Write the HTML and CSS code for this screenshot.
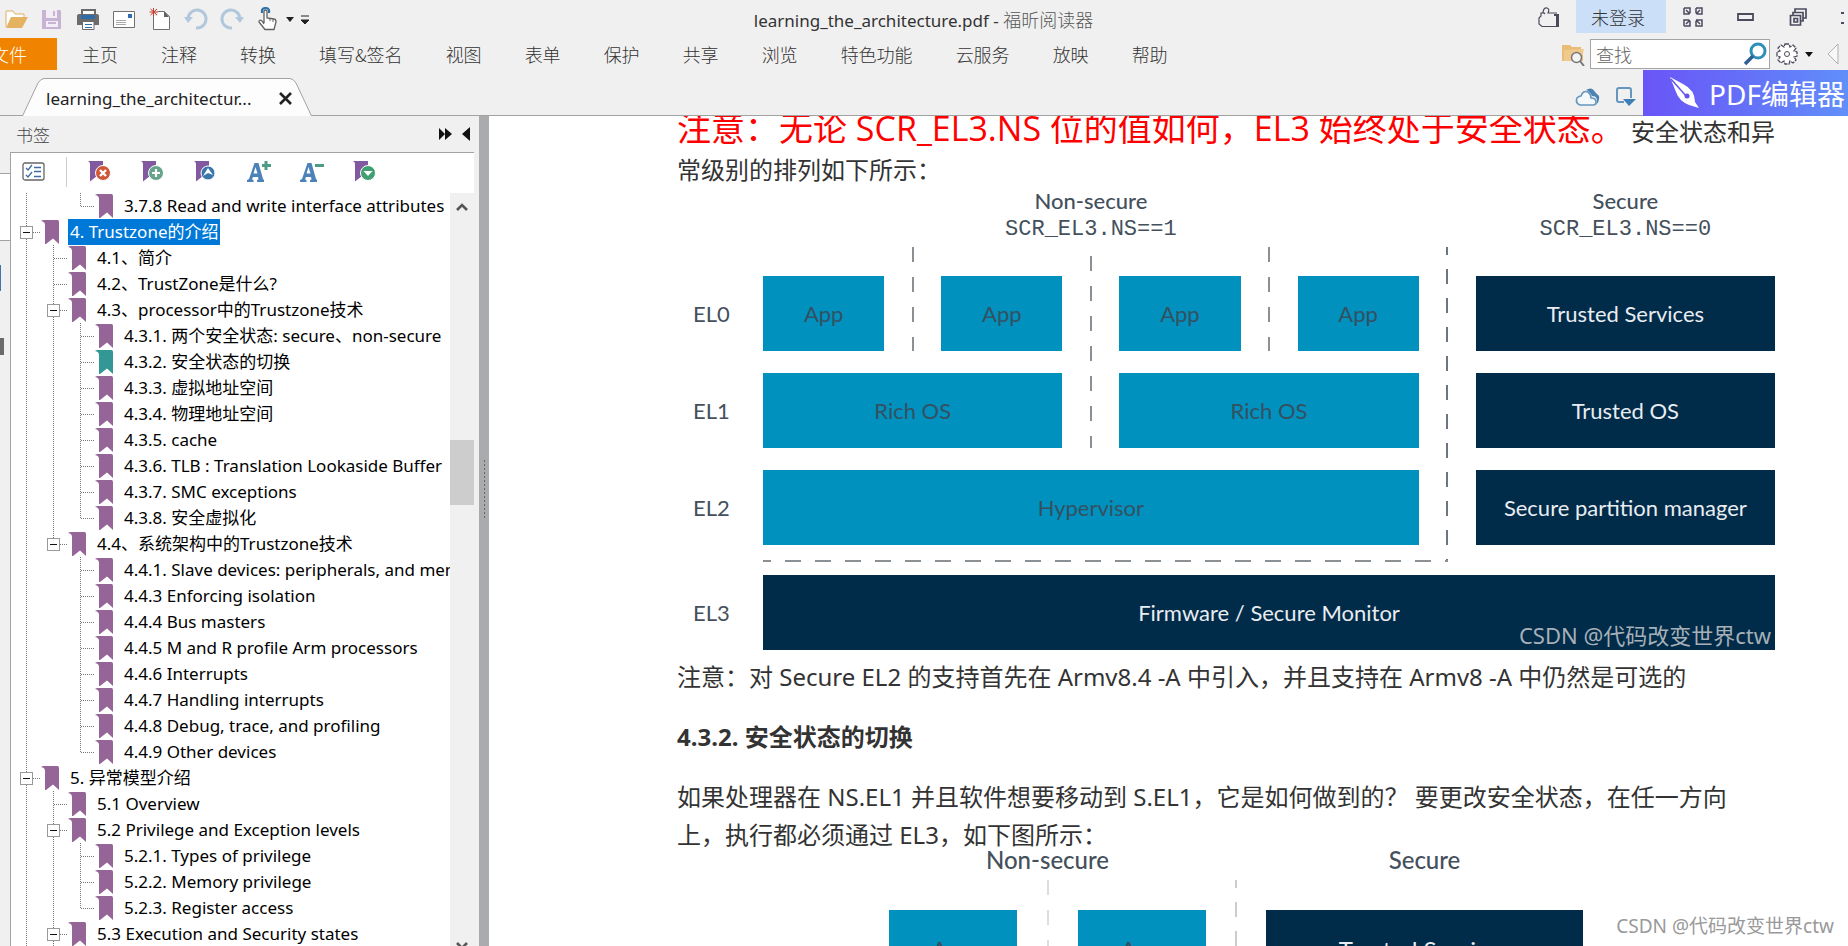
FILE: index.html
```html
<!DOCTYPE html>
<html lang="zh-CN">
<head>
<meta charset="utf-8">
<title>learning_the_architecture.pdf - 福昕阅读器</title>
<link rel="stylesheet" href="styles.css">
</head>
<body>
<svg class="defs" aria-hidden="true">
  <symbol id="bm" viewBox="0 0 18 24"><path d="M0 1Q1 0 3 0H16.500Q18 0 18 2V24L12 18.500 5 24H4V5Q4 1.500 0 1Z"/></symbol>
  <symbol id="tbm" viewBox="0 0 22 22"><path d="M0 0H15V18L9 15 2 20.500V3Q2 1 0 0Z" fill="#82589f"/></symbol>
</svg>
<header class="top">
  <div class="titlebar">
    <div class="quick">
      <button aria-label="打开"><svg width="24" height="24" viewBox="0 0 24 24"><path d="M2 20V4H9L11 7H20V11" fill="#fff" stroke="#dfae65"/><path d="M2 21L7 10H24L18 21Z" fill="#e4b261"/></svg></button>
      <button aria-label="保存"><svg width="24" height="24" viewBox="0 0 24 24"><path d="M2 3H20L21 4V22H2Z" fill="#c7b4d5"/><path d="M6 3H17V11H6ZM6 14H18V20H6Z" fill="#f3eef6"/><path d="M13 4H15V9H13ZM8 15H16V17H8Z" fill="#c7b4d5"/></svg></button>
      <button aria-label="打印"><svg width="24" height="24" viewBox="0 0 24 24"><path d="M6 3H19V8H6Z" fill="#fff" stroke="#6b6b6b" stroke-width="2"/><path d="M1 9Q1 7 3 7H21Q23 7 23 9V18H1Z" fill="#6b6b6b"/><path d="M5 8H19V12H5Z" fill="#2f6ca8"/><path d="M6.500 14.500H18V22.500H6.500Z" fill="#fff" stroke="#6b6b6b"/><path d="M9 17.500H16M9 20.500H16" stroke="#2f6ca8"/></svg></button>
      <button aria-label="邮件"><svg width="24" height="24" viewBox="0 0 24 24"><path d="M1.500 4.500H22.500V20.500H1.500Z" fill="#fff" stroke="#707070"/><path d="M16 7H20V11H16Z" fill="#2f6cb0"/><path d="M4 13.500H14M4 15.500H14M4 17.500H14" stroke="#aaa"/></svg></button>
      <button aria-label="新建"><svg width="24" height="24" viewBox="0 0 24 24"><path d="M5.500 4.500H16L21.500 9.500V22.500H5.500Z" fill="#fff" stroke="#707070"/><path d="M16 4V10H21Z" fill="#606060"/><path d="M1 1H10V9H1Z" fill="#efefef"/><path d="M5.500 1V9M1.500 5H10M2.500 2L9 8M9 2L2.500 8" stroke="#c43b28"/></svg></button>
      <button aria-label="撤销"><svg width="24" height="24" viewBox="0 0 24 24"><path d="M4 12A9 9 0 1 1 12 21" fill="none" stroke="#b1c7dc" stroke-width="3"/><path d="M0 10H9L4 16Z" fill="#b1c7dc"/></svg></button>
      <button aria-label="重做"><svg width="24" height="24" viewBox="0 0 24 24"><path d="M20 12A9 9 0 1 0 12 21" fill="none" stroke="#b1c7dc" stroke-width="3"/><path d="M15 10H24L20 16Z" fill="#b1c7dc"/></svg></button>
      <button aria-label="手型工具"><svg width="24" height="24" viewBox="0 0 24 24"><path d="M8 16V4Q9 2 11 4V11L18 12Q20 12 20 15L18 22.500H9L3 15Q3 12 6 14L8 17" fill="#fff" stroke="#606060" stroke-width="1.300"/><path d="M6 6V3Q7 1 9.500 1T13 3V6" fill="none" stroke="#2d72ab" stroke-width="2.200"/><path d="M14 12V14M17 12V15" stroke="#606060"/></svg></button>
      <svg width="10" height="24" viewBox="0 0 10 24"><path d="M1 10H9L5 15Z" fill="#222"/></svg>
      <svg width="10" height="24" viewBox="0 0 10 24"><path d="M1 9H9M1 13H9L5 17Z" fill="#222" stroke="#222"/></svg>
    </div>
    <h1 class="apptitle">learning_the_architecture.pdf - <span class="cjk">福昕阅读器</span></h1>
    <div class="window">
      <button class="skin" aria-label="皮肤"><svg width="24" height="24" viewBox="0 0 24 24"><path d="M8 9L6 7Q7 2 10 3T11 8L20 8M7 8H4V11L2 13V19L5 21.500H19" fill="none" stroke="#4b4b60" stroke-width="1.200"/><path d="M17 9H22V22H17V21H19V11H17Z" fill="#4b4b60"/></svg></button>
      <button class="login">未登录</button>
      <button aria-label="全屏"><svg width="22" height="24" viewBox="0 0 22 24"><g fill="none" stroke="#4b4b60" stroke-width="1.500"><path d="M2 3H8V8M2 3V9H7M4 5L8 9M14 3H20V9H15M14 3V8M18 5L14 9M2 21V15H7M2 21H8V16M4 19L8 15M14 15H20V21H14V16M18 19L14 15"/></g></svg></button>
      <button aria-label="最小化"><svg width="20" height="24" viewBox="0 0 20 24"><path d="M2 9H17V15H2Z" fill="none" stroke="#4b4b60" stroke-width="1.800"/></svg></button>
      <button aria-label="还原"><svg width="20" height="24" viewBox="0 0 20 24"><path d="M7 7V4H18V13H15M5 10V7.500H15V16H13M2.500 10.500H12.500V20H2.500ZM6 13.500H9.500V17H6Z" fill="none" stroke="#4b4b60" stroke-width="1.700"/></svg></button>
      <button class="closewin" aria-label="关闭"><svg width="4" height="24" viewBox="0 0 4 24"><path d="M1 7H4V9H1ZM1 17H4V19H1Z" fill="#4b4b60"/></svg></button>
    </div>
  </div>
  <div class="ribbon">
    <button class="file">文件</button>
    <nav class="menu">
      <button>主页</button><button>注释</button><button>转换</button><button>填写&amp;签名</button><button>视图</button><button>表单</button><button>保护</button><button>共享</button><button>浏览</button><button>特色功能</button><button>云服务</button><button>放映</button><button>帮助</button>
    </nav>
    <div class="find">
      <svg width="24" height="24" viewBox="0 0 24 24"><path d="M1 3H9L11 5H20V8H22V19H1Z" fill="#e9bd78"/><path d="M3 8L23 7 20 19H3Z" fill="#f0ca8c"/><circle cx="15.500" cy="15.500" r="5" fill="#f4f4f4" stroke="#777" stroke-width="1.500"/><path d="M19 19L23 24" stroke="#777" stroke-width="2"/></svg>
      <label class="search"><input type="text" placeholder="查找" aria-label="查找"><svg width="24" height="24" viewBox="0 0 24 24"><circle cx="15" cy="9" r="7" fill="#fff" stroke="#2f8fb8" stroke-width="3"/><path d="M10 14L2 22" stroke="#2f5f95" stroke-width="3.500"/></svg></label>
      <svg width="24" height="24" viewBox="0 0 24 24"><path d="M10 2H14L15 5L18 3L21 6L19 9L22 10V14L19 15L21 18L18 21L15 19L14 22H10L9 19L6 21L3 18L5 15L2 14V10L5 9L3 6L6 3L9 5Z" fill="#fff" stroke="#4b4b60" stroke-width="1.300" stroke-dasharray="4 1"/><circle cx="12" cy="12" r="2.500" fill="none" stroke="#4b4b60"/></svg>
      <svg width="10" height="24" viewBox="0 0 10 24"><path d="M1 10H9L5 15Z" fill="#111"/></svg>
      <svg class="prev" width="13" height="24" viewBox="0 0 13 24"><path d="M12 2V22L2 12Z" fill="#f8f8f8" stroke="#b0b0b0"/></svg>
    </div>
  </div>
  <div class="tabs">
    <div class="tab">
      <svg class="tabshape" viewBox="0 0 290 39" preserveAspectRatio="none"><path d="M0.500 39L16 6Q19 1.500 22 1.500H268Q271 1.500 274 6L289.500 39" fill="#fdfdfd" stroke="#a2a2a2"/></svg>
      <span>learning_the_architectur...</span>
      <button aria-label="关闭标签"><svg width="15" height="15" viewBox="0 0 15 15"><path d="M2 2L13 13M13 2L2 13" stroke="#222" stroke-width="2.600"/></svg></button>
    </div>
    <div class="cloud">
      <svg width="26" height="20" viewBox="0 0 26 20"><path d="M11 3Q17-1 20 5L24 9Q25 14 21 18Q24 9 17 9Q15 4 11 3Z" fill="#4b83b5"/><path d="M5 18Q0 16 2 11Q4 9 6 9Q8 3 13 5Q16 7 16 11Q21 11 21 15Q21 18 18 18Z" fill="#f4f8fb" stroke="#6696bd" stroke-width="1.600"/></svg>
      <svg width="22" height="20" viewBox="0 0 22 20"><path d="M9 15H4Q2 15 2 13V3Q2 1 4 1H14Q16 1 16 3V11" fill="none" stroke="#6696bd" stroke-width="2"/><path d="M8 12H21L14 19Z" fill="#3f7fb5"/></svg>
    </div>
    <button class="banner"><svg width="32" height="34" viewBox="0 0 32 34"><path d="M1 1L14 8Q26 14 26 26L30 32L20 29Q10 25 7 16ZM1 1L18 19" fill="#fff"/><path d="M2 3L18 21" stroke="#6253ee" stroke-width="1.500"/><circle cx="18" cy="20" r="2.500" fill="#6253ee"/></svg><span>PDF编辑器</span></button>
  </div>
</header>
<div class="main">
  <aside class="side">
    <div class="sidehead"><h2>书签</h2>
      <svg width="34" height="16" viewBox="0 0 34 16"><path d="M1 2L7 8 1 14ZM7 2L14 8 7 14ZM32 1V15L24 8Z" fill="#111"/></svg>
    </div>
    <div class="sidebody">
      <div class="rail"><i class="railtab"></i><div class="railrest"><i class="bluebar"></i><i class="chip"></i></div></div>
      <div class="panel">
        <div class="tools">
          <button aria-label="选项"><svg width="24" height="22" viewBox="0 0 24 22"><rect x="1" y="2" width="21" height="17" rx="2" fill="#fff" stroke="#666" stroke-width="1.300"/><path d="M4 7L6 9 10 4M4 14L6 16 10 11M12 6.500H19M12 10.500H19M12 15.500H19" fill="none" stroke="#3d6da0" stroke-width="1.300"/></svg></button>
          <i class="sep"></i>
          <button class="wide" aria-label="删除书签"><svg width="24" height="22" viewBox="0 0 24 22"><use href="#tbm" width="22" height="22"/><circle cx="15" cy="12" r="7.500" fill="#cf5838" stroke="#fff"/><path d="M12 9L18 15M18 9L12 15" stroke="#fff" stroke-width="2.400"/></svg></button>
          <button class="wide" aria-label="添加书签"><svg width="24" height="22" viewBox="0 0 24 22"><use href="#tbm" width="22" height="22"/><circle cx="15" cy="12" r="7.500" fill="#67a58b" stroke="#fff"/><path d="M15 8V16M11 12H19" stroke="#fff" stroke-width="2.200"/></svg></button>
          <button class="wide" aria-label="展开书签"><svg width="24" height="22" viewBox="0 0 24 22"><use href="#tbm" width="22" height="22"/><circle cx="14" cy="12" r="7" fill="#3977ab" stroke="#fff"/><path d="M14 7L19 14 14 12 9 15Z" fill="#fff"/></svg></button>
          <button class="wide" aria-label="放大字体"><svg width="26" height="22" viewBox="0 0 26 22"><path d="M0 21V19L2 18 7.500 2H11.500L16 18 17 19V21H10V19L11.500 18.500 11 16H6L5 18.500 6.500 19V21ZM6.500 12.500H10.500L8.500 6Z" fill="#4d82b9"/><path d="M19 0V9M15 4.500H24" stroke="#4d9c86" stroke-width="3"/></svg></button>
          <button class="wide" aria-label="缩小字体"><svg width="26" height="22" viewBox="0 0 26 22"><path d="M0 21V19L2 18 7.500 2H11.500L16 18 17 19V21H10V19L11.500 18.500 11 16H6L5 18.500 6.500 19V21ZM6.500 12.500H10.500L8.500 6Z" fill="#4d82b9"/><path d="M15 4.500H24" stroke="#4d9c86" stroke-width="3"/></svg></button>
          <button class="wide" aria-label="书签菜单"><svg width="24" height="22" viewBox="0 0 24 22"><use href="#tbm" width="22" height="22"/><circle cx="15" cy="12" r="7.500" fill="#41a072" stroke="#fff"/><path d="M10.500 10H19.500L15 15Z" fill="#fff"/></svg></button>
        </div>
        <div class="treewrap">
          <ul class="tree">
            <li><i class="g v"></i><i class="g"></i><i class="g l"></i><svg><use href="#bm"/></svg><a href="#">3.7.8 Read and write interface attributes</a></li>
            <li><i class="g v e"><button aria-label="折叠"></button></i><svg><use href="#bm"/></svg><a href="#" class="sel">4. Trustzone的介绍</a></li>
            <li><i class="g v"></i><i class="g t"></i><svg><use href="#bm"/></svg><a href="#">4.1、简介</a></li>
            <li><i class="g v"></i><i class="g t"></i><svg><use href="#bm"/></svg><a href="#">4.2、TrustZone是什么?</a></li>
            <li><i class="g v"></i><i class="g v e"><button aria-label="折叠"></button></i><svg><use href="#bm"/></svg><a href="#">4.3、processor中的Trustzone技术</a></li>
            <li><i class="g v"></i><i class="g v"></i><i class="g t"></i><svg><use href="#bm"/></svg><a href="#">4.3.1. 两个安全状态: secure、non-secure</a></li>
            <li><i class="g v"></i><i class="g v"></i><i class="g t"></i><svg class="cur"><use href="#bm"/></svg><a href="#">4.3.2. 安全状态的切换</a></li>
            <li><i class="g v"></i><i class="g v"></i><i class="g t"></i><svg><use href="#bm"/></svg><a href="#">4.3.3. 虚拟地址空间</a></li>
            <li><i class="g v"></i><i class="g v"></i><i class="g t"></i><svg><use href="#bm"/></svg><a href="#">4.3.4. 物理地址空间</a></li>
            <li><i class="g v"></i><i class="g v"></i><i class="g t"></i><svg><use href="#bm"/></svg><a href="#">4.3.5. cache</a></li>
            <li><i class="g v"></i><i class="g v"></i><i class="g t"></i><svg><use href="#bm"/></svg><a href="#">4.3.6. TLB : Translation Lookaside Buffer</a></li>
            <li><i class="g v"></i><i class="g v"></i><i class="g t"></i><svg><use href="#bm"/></svg><a href="#">4.3.7. SMC exceptions</a></li>
            <li><i class="g v"></i><i class="g v"></i><i class="g l"></i><svg><use href="#bm"/></svg><a href="#">4.3.8. 安全虚拟化</a></li>
            <li><i class="g v"></i><i class="g l e"><button aria-label="折叠"></button></i><svg><use href="#bm"/></svg><a href="#">4.4、系统架构中的Trustzone技术</a></li>
            <li><i class="g v"></i><i class="g"></i><i class="g t"></i><svg><use href="#bm"/></svg><a href="#">4.4.1. Slave devices: peripherals, and memories</a></li>
            <li><i class="g v"></i><i class="g"></i><i class="g t"></i><svg><use href="#bm"/></svg><a href="#">4.4.3 Enforcing isolation</a></li>
            <li><i class="g v"></i><i class="g"></i><i class="g t"></i><svg><use href="#bm"/></svg><a href="#">4.4.4 Bus masters</a></li>
            <li><i class="g v"></i><i class="g"></i><i class="g t"></i><svg><use href="#bm"/></svg><a href="#">4.4.5 M and R profile Arm processors</a></li>
            <li><i class="g v"></i><i class="g"></i><i class="g t"></i><svg><use href="#bm"/></svg><a href="#">4.4.6 Interrupts</a></li>
            <li><i class="g v"></i><i class="g"></i><i class="g t"></i><svg><use href="#bm"/></svg><a href="#">4.4.7 Handling interrupts</a></li>
            <li><i class="g v"></i><i class="g"></i><i class="g t"></i><svg><use href="#bm"/></svg><a href="#">4.4.8 Debug, trace, and profiling</a></li>
            <li><i class="g v"></i><i class="g"></i><i class="g l"></i><svg><use href="#bm"/></svg><a href="#">4.4.9 Other devices</a></li>
            <li><i class="g v e"><button aria-label="折叠"></button></i><svg><use href="#bm"/></svg><a href="#">5. 异常模型介绍</a></li>
            <li><i class="g v"></i><i class="g t"></i><svg><use href="#bm"/></svg><a href="#">5.1 Overview</a></li>
            <li><i class="g v"></i><i class="g v e"><button aria-label="折叠"></button></i><svg><use href="#bm"/></svg><a href="#">5.2 Privilege and Exception levels</a></li>
            <li><i class="g v"></i><i class="g v"></i><i class="g t"></i><svg><use href="#bm"/></svg><a href="#">5.2.1. Types of privilege</a></li>
            <li><i class="g v"></i><i class="g v"></i><i class="g t"></i><svg><use href="#bm"/></svg><a href="#">5.2.2. Memory privilege</a></li>
            <li><i class="g v"></i><i class="g v"></i><i class="g l"></i><svg><use href="#bm"/></svg><a href="#">5.2.3. Register access</a></li>
            <li><i class="g v"></i><i class="g v e"><button aria-label="折叠"></button></i><svg><use href="#bm"/></svg><a href="#">5.3 Execution and Security states</a></li>
          </ul>
          <div class="scroll">
            <svg width="14" height="10" viewBox="0 0 14 10"><path d="M2 8L7 3 12 8" fill="none" stroke="#555" stroke-width="2.600"/></svg>
            <i class="thumb"></i>
            <svg class="down" width="14" height="10" viewBox="0 0 14 10"><path d="M2 2L7 7 12 2" fill="none" stroke="#555" stroke-width="2.600"/></svg>
          </div>
        </div>
      </div>
    </div>
  </aside>
  <div class="splitter"><i></i></div>
  <main class="doc">
    <article>
      <p class="lead"><span class="red">注意：无论 SCR_EL3.NS 位的值如何，EL3 始终处于安全状态。</span> 安全状态和异常级别的排列如下所示：</p>
      <div class="fig fig1">
        <span class="h ns">Non-secure</span><span class="h sec">Secure</span>
        <code class="ns">SCR_EL3.NS==1</code><code class="sec">SCR_EL3.NS==0</code>
        <i class="dash d1"></i><i class="dash d2"></i><i class="dash d3"></i><i class="dash d4"></i><i class="hdash"></i>
        <span class="lv r0">EL0</span><span class="b a1">App</span><span class="b a2">App</span><span class="b a3">App</span><span class="b a4">App</span><span class="b n r0">Trusted Services</span>
        <span class="lv r1">EL1</span><span class="b o1">Rich OS</span><span class="b o2">Rich OS</span><span class="b n r1">Trusted OS</span>
        <span class="lv r2">EL2</span><span class="b hyp">Hypervisor</span><span class="b n r2">Secure partition manager</span>
        <span class="lv r3">EL3</span><span class="b n fw">Firmware / Secure Monitor</span>
        <span class="mark">CSDN @代码改变世界ctw</span>
      </div>
      <p class="note">注意：对 Secure EL2 的支持首先在 Armv8.4 -A 中引入，并且支持在 Armv8 -A 中仍然是可选的</p>
      <h3>4.3.2. 安全状态的切换</h3>
      <p class="switching">如果处理器在 NS.EL1 并且软件想要移动到 S.EL1，它是如何做到的？ 要更改安全状态，在任一方向上，执行都必须通过 EL3，如下图所示：</p>
      <div class="fig fig2">
        <span class="h ns">Non-secure</span><span class="h sec">Secure</span>
        <i class="dash d1"></i><i class="dash d2"></i>
        <span class="b a1">App</span><span class="b a2">App</span><span class="b n ts">Trusted Services</span>
      </div>
    </article>
    <span class="stamp">CSDN @代码改变世界ctw</span>
  </main>
</div>
</body>
</html>
```
FILE: styles.css
```css
* { box-sizing: border-box; }
body {
  margin: 0;
  height: 100vh;
  display: flex;
  flex-direction: column;
  overflow: hidden;
  background: #f0f0f0;
  color: #333;
  font: 17px "Noto Sans", "Noto Sans CJK SC", sans-serif;
}
button { border: 0; padding: 0; margin: 0; background: none; font: inherit; color: inherit; }
svg { display: block; flex: none; }
i { display: block; }
h1, h2, h3, p, ul { margin: 0; padding: 0; font-weight: 400; }
.defs { position: absolute; width: 0; height: 0; }

.top { flex: none; height: 116px; border-bottom: 1px solid #a2a2a2; }
.titlebar { display: flex; height: 38px; }
.quick { display: flex; align-items: center; gap: 12px; padding-left: 4px; height: 38px; width: 310px; }
.quick > svg { margin-left: -7px; }
.apptitle { flex: 1; text-align: center; font-size: 17px; line-height: 38px; color: #333; }
.cjk { font-family: "Noto Sans CJK SC", sans-serif; font-weight: 300; font-size: 18px; color: #555; }
.window { display: flex; align-items: center; width: 311px; height: 33px; }
.skin { margin-right: 15px; }
.login { width: 90px; height: 33px; padding-right: 6px; margin-right: 16px; background: #ccdff9; font-family: "Noto Sans CJK SC", sans-serif; font-weight: 300; font-size: 18px; }
.window button + button + button + button { margin-left: 32px; }
.closewin { overflow: hidden; }

.ribbon { display: flex; height: 32px; align-items: center; font-family: "Noto Sans CJK SC", sans-serif; font-size: 18px; font-weight: 300; color: #333; }
.file { width: 57px; height: 32px; background: #f08300; color: #fff; display: flex; justify-content: flex-end; padding-right: 30px; align-items: center; white-space: nowrap; }
.menu { display: flex; gap: 43px; padding-left: 25px; }
.menu button { white-space: nowrap; }
.find { display: flex; align-items: center; margin-left: auto; gap: 5px; padding-right: 9px; }
.search { display: flex; align-items: center; width: 180px; height: 30px; padding: 0 2px 0 5px; background: #fff; border: 1px solid #a4a4a4; }
.search input { flex: 1; min-width: 0; border: 0; outline: 0; padding: 0; background: none; font: inherit; }
.search input::placeholder { color: #666; }
.find .prev { margin-left: 7px; }

.tabs { display: flex; height: 46px; align-items: flex-end; }
.tab { position: relative; display: flex; align-items: center; justify-content: space-between; width: 290px; height: 39px; margin-left: 22px; padding: 4px 19px 0 24px; font-size: 17px; color: #222; }
.tabshape { position: absolute; left: 0; top: 0; width: 100%; height: 100%; }
.tab span, .tab button { position: relative; }
.cloud { display: flex; gap: 14px; align-items: center; margin-left: auto; padding: 0 6px 9px 0; }
.banner { display: flex; align-items: center; gap: 8px; width: 205px; height: 46px; padding-left: 26px; overflow: hidden; background: linear-gradient(90deg, #6a55f7, #6470f8 50%, #618ffa); color: #fff; font-size: 28px; white-space: nowrap; }

.main { flex: 1; min-height: 0; display: flex; }
.side { width: 479px; flex: none; display: flex; flex-direction: column; padding-right: 5px; }
.sidehead { display: flex; justify-content: space-between; align-items: center; height: 36px; padding: 0 2px 0 16px; }
.sidehead h2 { font-family: "Noto Sans CJK SC", sans-serif; font-size: 17px; font-weight: 300; color: #444; }
.sidebody { flex: 1; min-height: 0; display: flex; }
.rail { width: 10px; flex: none; padding-top: 21px; display: flex; flex-direction: column; }
.railtab { height: 67px; background: #fff; border-top: 1px solid #a2a2a2; }
.railrest { flex: 1; border-top: 1px solid #a2a2a2; padding-top: 24px; }
.bluebar { width: 1px; height: 26px; background: #3f75b0; }
.chip { width: 4px; height: 17px; margin-top: 47px; background: #6a6a6a; }
.panel { flex: 1; min-width: 0; display: flex; flex-direction: column; background: #fff; border-top: 1px solid #a2a2a2; border-left: 1px solid #a2a2a2; }
.tools { display: flex; align-items: center; height: 40px; padding: 0 0 2px 11px; }
.sep { width: 1px; height: 30px; margin: 0 21px 0 20px; background: #ccc; }
.wide { width: 53px; }
.wide svg { margin: 0; }
.treewrap { flex: 1; min-height: 0; display: flex; }
.tree { flex: 1; min-width: 0; overflow: hidden; list-style: none; font-size: 17px; color: #000; }
.tree li { display: flex; height: 26px; padding-left: 2px; white-space: nowrap; }
.tree li svg { width: 18px; height: 24px; margin: 1px 9px 0 1px; fill: #966598; }
.tree li svg.cur { fill: #339796; }
.tree a { color: inherit; text-decoration: none; line-height: 25px; padding: 0 2px; }
.tree .sel { background: #0078d7; color: #fff; }
.g { position: relative; width: 27px; flex: none; }
.g.v, .g.t { background: repeating-linear-gradient(#777 0 1px, #fff 1px 2px) 13px 0 / 1px 26px no-repeat; }
.g.l { background: repeating-linear-gradient(#777 0 1px, #fff 1px 2px) 13px 0 / 1px 13px no-repeat; }
.g.t::after, .g.l::after, .g.e::after { content: ""; position: absolute; left: 14px; right: 0; top: 13px; height: 1px; background: repeating-linear-gradient(90deg, #777 0 1px, #fff 1px 2px); }
.g button { position: absolute; z-index: 1; left: 7px; top: 7px; width: 13px; height: 13px; border: 1px solid #999; background: linear-gradient(#111, #111) center / 7px 1px no-repeat #fff; }
.scroll { width: 24px; flex: none; display: flex; flex-direction: column; align-items: center; background: #f0f0f0; padding-top: 9px; }
.thumb { width: 24px; height: 65px; margin-top: 228px; background: #cdcdcd; }
.down { margin: auto 0 -5px; }
.splitter { width: 10px; flex: none; background: #a9abad; padding: 343px 3px 0 4px; }
.splitter i { height: 60px; background: radial-gradient(circle, #666 0 1px, transparent 1px) 0 0 / 3px 4px; }

.doc { position: relative; flex: 1; min-width: 0; overflow: hidden; background: #fff; padding-left: 188px; font-family: "Noto Sans", "Noto Sans CJK SC", sans-serif; font-size: 24px; line-height: 38px; color: #333; }
article { width: 1098px; }
.lead { margin-top: -9px; }
.red { color: #f00; font-family: "Open Sans", "Noto Sans CJK SC", sans-serif; font-size: 34px; line-height: 42px; }
.note { margin-top: 8px; white-space: nowrap; }
.switching { padding-right: 18px; }
h3 { margin: 22px 0; font-size: 24px; font-weight: 700; }
.fig { display: grid; font-family: Lato, sans-serif; font-size: 22px; line-height: 24px; color: #44505c; }
.fig1 { grid-template-columns: 86fr 121fr 57fr 121fr 57fr 121fr 57fr 121fr 29fr 28fr 299fr; grid-template-rows: 25px 33px 29px 75px 22px 75px 22px 75px 17px 13px 75px; }
.h { text-align: center; font-weight: 500; }
.fig code { grid-row: 2; text-align: center; line-height: 32px; font-family: "Liberation Mono", monospace; }
.fig1 .h { grid-row: 1; }
.fig1 .ns { grid-column: 2 / 9; }
.fig1 .sec { grid-column: 11; }
.lv { grid-column: 1; align-self: center; padding-left: 16px; }
.fig1 .r0 { grid-row: 4; }
.fig1 .r1 { grid-row: 6; }
.fig1 .r2 { grid-row: 8; }
.fig1 .r3 { grid-row: 11; }
.b { display: flex; align-items: center; justify-content: center; background: #0091bf; color: #35505f; }
.b.n { background: #002b49; color: #e9edf1; }
.fig1 .n { grid-column: 11; }
.fig1 .a1 { grid-area: 4 / 2; }
.fig1 .a2 { grid-area: 4 / 4; }
.fig1 .a3 { grid-area: 4 / 6; }
.fig1 .a4 { grid-area: 4 / 8; }
.fig1 .o1 { grid-area: 6 / 2 / 7 / 5; }
.fig1 .o2 { grid-area: 6 / 6 / 7 / 9; }
.fig1 .hyp { grid-area: 8 / 2 / 9 / 9; }
.fig1 .fw { grid-area: 11 / 2 / 12 / 12; }
.dash { width: 2px; justify-self: center; background: repeating-linear-gradient(#8b9095 0 15px, #fff 15px 30px); }
.fig1 .d1 { grid-area: 3 / 3 / 5 / 4; }
.fig1 .d2 { grid-area: 3 / 5 / 7 / 6; margin-top: 9px; }
.fig1 .d3 { grid-area: 3 / 7 / 5 / 8; }
.fig1 .d4 { grid-area: 3 / 9 / 10 / 10; justify-self: end; background: repeating-linear-gradient(#6d7680 0 8px, #fff 8px 22px, #6d7680 22px 29px); }
.hdash { grid-area: 9 / 2 / 10 / 10; align-self: end; height: 2px; background: repeating-linear-gradient(90deg, #8b9095 0 8px, #fff 8px 22px, #8b9095 22px 30px); }
.mark { grid-area: 11 / 8 / 12 / 12; place-self: end; padding: 0 4px 3px 0; z-index: 1; font-family: "Noto Sans", "Noto Sans CJK SC", sans-serif; color: #a7b0b8; }
.fig2 { grid-template-columns: 212fr 128fr 61fr 128fr 60fr 317fr 192fr; grid-template-rows: 26px 30px 79px; font-size: 24px; }
.fig2 .h { grid-row: 1; line-height: 12px; }
.fig2 .ns { grid-column: 2 / 5; }
.fig2 .sec { grid-column: 6; }
.fig2 .dash { background: repeating-linear-gradient(#ddd 0 15px, #fff 15px 30px); }
.fig2 .d1 { grid-area: 2 / 3 / 4 / 4; }
.fig2 .d2 { grid-area: 2 / 5 / 4 / 6; background: repeating-linear-gradient(#ccc 0 8px, #fff 8px 22px, #ccc 22px 29px); }
.fig2 .a1 { grid-area: 3 / 2; }
.fig2 .a2 { grid-area: 3 / 4; }
.fig2 .ts { grid-area: 3 / 6; }
.stamp { position: absolute; right: 14px; bottom: 5px; font: 19px/30px "Noto Sans", "Noto Sans CJK SC", sans-serif; color: #999; }
```
